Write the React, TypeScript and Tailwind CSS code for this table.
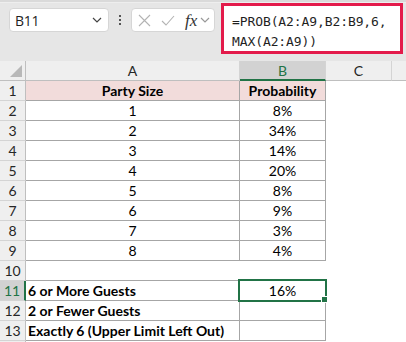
import React from 'react';

const rows: { n: number; a: string; b: string }[] = [
  { n: 2, a: '1', b: '8%' },
  { n: 3, a: '2', b: '34%' },
  { n: 4, a: '3', b: '14%' },
  { n: 5, a: '4', b: '20%' },
  { n: 6, a: '5', b: '8%' },
  { n: 7, a: '6', b: '9%' },
  { n: 8, a: '7', b: '3%' },
  { n: 9, a: '8', b: '4%' },
];

const Chevron = ({ color = '#444' }: { color?: string }) => (
  <svg width="10" height="6" viewBox="0 0 10 6" fill="none">
    <path d="M1 1l4 4 4-4" stroke={color} strokeWidth="1.2" />
  </svg>
);

const RowHead = ({ n, active }: { n?: number; active?: boolean }) =>
  active ? (
    <div className="w-[26px] h-full flex items-center justify-center bg-[#d2d2d2] text-[#217346] border-r-2 border-r-[#217346] border-b border-b-[#d4d4d4]">
      {n}
    </div>
  ) : (
    <div className="w-[26px] h-full flex items-center justify-center bg-[#efefef] text-[#262626] border-r border-r-[#bfbfbf] border-b border-b-[#d4d4d4]">
      {n}
    </div>
  );

const App: React.FC = () => {
  return (
    <div className="w-[406px] h-[342px] overflow-hidden bg-white font-['Lato',sans-serif] text-[14px] text-black">
      {/* formula bar */}
      <div className="h-[61px] bg-[#e6e6e6] flex flex-col">
        <div className="h-[3px] bg-[#dadada] border-b border-[#eeeeee]" />
        <div className="flex items-start pl-[9px] -mt-px">
          <div className="mt-[6px] w-[100px] h-[24px] bg-white border border-[#d6d6d6] rounded-[4px] flex items-center justify-between pl-[5px] pr-[6px]">
            <span className="text-[#1f1f1f] text-[14px] font-['Open_Sans',sans-serif] tracking-[-0.3px]">B11</span>
            <Chevron />
          </div>
          <div className="mt-[6px] w-[22px] h-[24px] flex flex-col items-center justify-center gap-[2px]">
            <div className="w-[2px] h-[2px] bg-[#555]" />
            <div className="w-[2px] h-[2px] bg-[#555]" />
            <div className="w-[2px] h-[2px] bg-[#555]" />
          </div>
          <div className="mt-[6px] w-[84px] h-[24px] bg-white border border-[#d6d6d6] rounded-[4px] flex items-center pl-[6px] pr-[3px]">
            <svg width="13" height="13" viewBox="0 0 13 13" fill="none">
              <path d="M1 1l11 11M12 1L1 12" stroke="#b3b3b3" strokeWidth="1.1" />
            </svg>
            <svg width="14" height="11" viewBox="0 0 14 11" fill="none" className="ml-[10px]">
              <path d="M1 6l4 4 8-9" stroke="#b3b3b3" strokeWidth="1.1" />
            </svg>
            <span className="ml-[10px] font-['Liberation_Serif',serif] italic text-[17px] text-[#333] leading-none">fx</span>
            <span className="ml-[3px]">
              <Chevron color="#999" />
            </span>
          </div>
          <div className="ml-[6px] mt-px w-[182px] h-[51px] bg-white border-[3px] border-[#e31b4b] pl-[8px] pt-[6px] font-['DejaVu_Sans_Mono',monospace] text-[13px] leading-[20px] text-[#1f1f1f] tracking-[-0.1px]">
            <div>=PROB(A2:A9,B2:B9,6,</div>
            <div>MAX(A2:A9))</div>
          </div>
        </div>
      </div>

      {/* column headers */}
      <div className="flex h-[20px]">
        <div className="w-[26px] h-full bg-[#efefef] border-r border-r-[#bfbfbf] border-b border-b-[#bfbfbf] flex items-end justify-end pr-[3px] pb-[3px]">
          <svg width="12" height="12" viewBox="0 0 12 12">
            <path d="M12 0V12H0Z" fill="#b8b8b8" />
          </svg>
        </div>
        <div className="w-[214px] h-full bg-[#efefef] text-[#262626] border-r border-r-[#d4d4d4] border-b border-b-[#bfbfbf] flex items-center justify-center">A</div>
        <div className="w-[86px] h-full bg-[#d2d2d2] text-[#217346] border-r border-r-[#d4d4d4] border-b-2 border-b-[#217346] flex items-center justify-center">B</div>
        <div className="w-[66px] h-full bg-[#efefef] text-[#262626] border-r border-r-[#d4d4d4] border-b border-b-[#bfbfbf] flex items-center justify-center">C</div>
        <div className="flex-1 h-full bg-[#efefef] border-b border-b-[#bfbfbf]" />
      </div>

      {/* row 1 */}
      <div className="flex h-[20px]">
        <RowHead n={1} />
        <div className="w-[214px] h-full bg-[#f2dcdb] font-bold border-r border-b border-[#a6a6a6] flex items-center justify-center">Party Size</div>
        <div className="w-[86px] h-full bg-[#f2dcdb] font-bold border-r border-b border-[#a6a6a6] flex items-center justify-center">Probability</div>
      </div>

      {rows.map((r) => (
        <div key={r.n} className="flex h-[20px]">
          <RowHead n={r.n} />
          <div className="w-[214px] h-full border-r border-b border-[#a6a6a6] flex items-center justify-center">{r.a}</div>
          <div className="w-[86px] h-full border-r border-b border-[#a6a6a6] flex items-center justify-center">{r.b}</div>
        </div>
      ))}

      {/* row 10 */}
      <div className="flex h-[20px]">
        <RowHead n={10} />
        <div className="w-[214px] h-full border-b border-[#a6a6a6]" />
        <div className="w-[86px] h-full border-b border-[#a6a6a6]" />
      </div>

      {/* row 11 */}
      <div className="flex h-[20px]">
        <RowHead n={11} active />
        <div className="w-[214px] h-full font-bold border-r border-b border-[#a6a6a6] flex items-center pl-[2px]">6 or More Guests</div>
        <div className="relative w-[86px] h-full border-r border-b border-[#a6a6a6] flex items-center justify-center">
          16%
          <div className="absolute -left-[2px] -top-[2px] w-[89px] h-[23px] border-2 border-[#217346]" />
          <div className="absolute -right-[3px] -bottom-[3px] w-[5px] h-[5px] bg-[#217346] border border-white box-content" />
        </div>
      </div>

      {/* row 12 */}
      <div className="flex h-[20px]">
        <RowHead n={12} />
        <div className="w-[214px] h-full font-bold border-r border-b border-[#a6a6a6] flex items-center pl-[2px]">2 or Fewer Guests</div>
        <div className="w-[86px] h-full border-r border-b border-[#a6a6a6]" />
      </div>

      {/* row 13 */}
      <div className="flex h-[20px]">
        <RowHead n={13} />
        <div className="w-[214px] h-full font-bold border-r border-b border-[#a6a6a6] flex items-center pl-[2px] whitespace-nowrap">Exactly 6 (Upper Limit Left Out)</div>
        <div className="w-[86px] h-full border-r border-b border-[#a6a6a6]" />
      </div>

      <div className="flex h-[20px]">
        <RowHead />
      </div>
    </div>
  );
};

export default App;
